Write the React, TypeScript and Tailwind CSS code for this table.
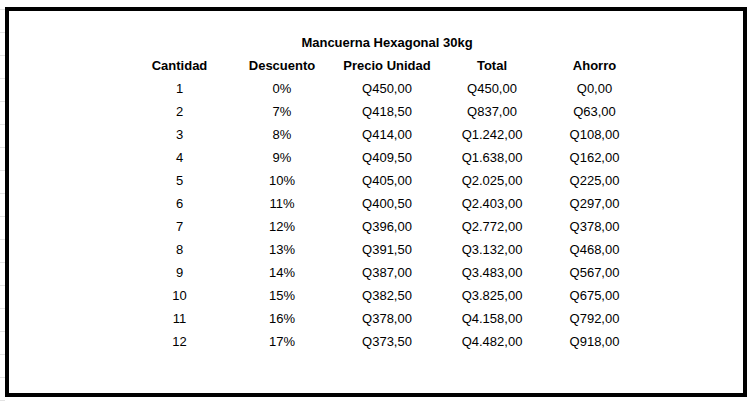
import React from "react";

const rows: [string, string, string, string, string][] = [
  ["1", "0%", "Q450,00", "Q450,00", "Q0,00"],
  ["2", "7%", "Q418,50", "Q837,00", "Q63,00"],
  ["3", "8%", "Q414,00", "Q1.242,00", "Q108,00"],
  ["4", "9%", "Q409,50", "Q1.638,00", "Q162,00"],
  ["5", "10%", "Q405,00", "Q2.025,00", "Q225,00"],
  ["6", "11%", "Q400,50", "Q2.403,00", "Q297,00"],
  ["7", "12%", "Q396,00", "Q2.772,00", "Q378,00"],
  ["8", "13%", "Q391,50", "Q3.132,00", "Q468,00"],
  ["9", "14%", "Q387,00", "Q3.483,00", "Q567,00"],
  ["10", "15%", "Q382,50", "Q3.825,00", "Q675,00"],
  ["11", "16%", "Q378,00", "Q4.158,00", "Q792,00"],
  ["12", "17%", "Q373,50", "Q4.482,00", "Q918,00"],
];

const headers = ["Cantidad", "Descuento", "Precio Unidad", "Total", "Ahorro"];
const widths = ["w-[101px]", "w-[104px]", "w-[106px]", "w-[104px]", "w-[101px]"];

export default function App() {
  return (
    <div
      className="relative w-[751px] h-[401px] bg-white overflow-hidden text-black"
      style={{ fontFamily: '"Liberation Sans", Arial, sans-serif' }}
    >
      <div className="absolute left-0 top-0 w-[5px] flex flex-col">
        <div className="h-[10px] border-b border-[#e3e3e3]" />
        {Array.from({ length: 17 }).map((_, i) => (
          <div key={i} className="h-[23px] border-b border-[#e3e3e3]" />
        ))}
      </div>
      <div className="absolute left-[5px] top-[7px] w-[742px] h-[390px] border-4 border-black bg-white">
        <div className="pl-[120px] pt-[20px] flex flex-col text-[13px] leading-[23px]">
          <div className="w-[516px] text-center font-bold">Mancuerna Hexagonal 30kg</div>
          <div className="flex font-bold">
            {headers.map((h, i) => (
              <div key={h} className={`${widths[i]} text-center`}>
                {h}
              </div>
            ))}
          </div>
          {rows.map((r, ri) => (
            <div key={ri} className="flex">
              {r.map((c, ci) => (
                <div key={ci} className={`${widths[ci]} text-center`}>
                  {c}
                </div>
              ))}
            </div>
          ))}
        </div>
      </div>
    </div>
  );
}
